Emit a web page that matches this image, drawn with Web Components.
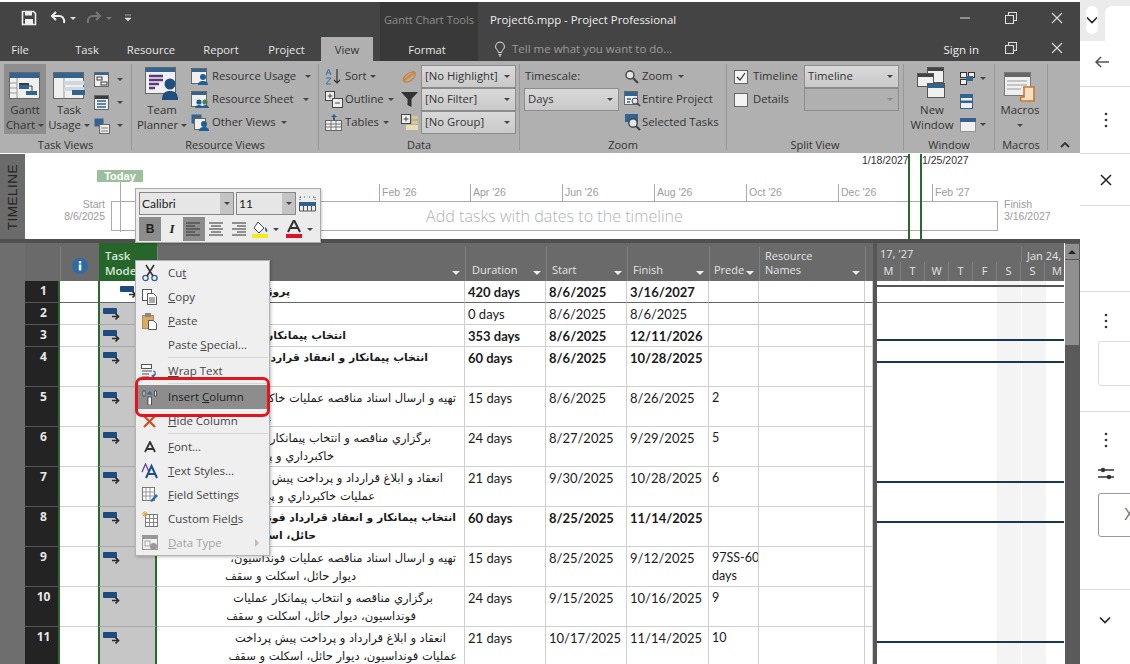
<!DOCTYPE html>
<html><head><meta charset="utf-8"><style>
html,body{margin:0;padding:0;width:1130px;height:664px;overflow:hidden;background:#fff;font-family:"Open Sans","Noto Sans",sans-serif}
</style></head><body>
<x-app></x-app>
<script>
const B='#33638f',D='#3c3c3c',W='#f0f0f0',G='#777';
const ICONS={
save:[16,16,`<path d="M1.5 1.5h11l2 2v11h-13z" fill="none" stroke="#eee" stroke-width="1.6"/><rect x="4" y="1.5" width="7" height="4" fill="#eee"/><rect x="4" y="9" width="8" height="5.5" fill="#eee"/>`],
undo:[18,16,`<path d="M15 13c1-5-2-7-5-7H3M7 2L3 6l4 4" fill="none" stroke="#eee" stroke-width="2"/>`],
redo:[18,16,`<path d="M3 13c-1-5 2-7 5-7h7M11 2l4 4-4 4" fill="none" stroke="#777" stroke-width="2"/>`],
bulb:[12,16,`<path d="M6 1a4.5 4.5 0 0 0-2.5 8.2c.6.5.7 1.3.8 2.3h3.4c.1-1 .2-1.8.8-2.3A4.5 4.5 0 0 0 6 1zM4.5 13.5h3M5 15h2" fill="none" stroke="#ddd"/>`],
gantt:[32,28,`<rect x=".5" y=".5" width="30" height="26" fill="${W}" stroke="#666"/><rect x="1" y="1" width="29" height="5" fill="${B}"/><path d="M8 6v20M1 11h7M1 16h7M1 21h7" stroke="#999"/><rect x="10" y="11" width="10" height="3" fill="${D}"/><rect x="10" y="13" width="10" height="4" fill="${B}"/><rect x="17" y="19" width="11" height="4" fill="${B}"/><path d="M20 14h3v5" stroke="${D}" fill="none"/>`],
usage:[32,28,`<rect x=".5" y=".5" width="30" height="26" fill="${W}" stroke="#666"/><rect x="1" y="1" width="29" height="5" fill="${B}"/><path d="M11 6v20" stroke="#999"/><rect x="11" y="9" width="20" height="4" fill="#cfd8e0"/><rect x="11" y="15" width="20" height="4" fill="#cfd8e0"/><rect x="19" y="18" width="13" height="5" fill="${B}"/>`],
net:[16,16,`<rect x=".5" y=".5" width="14" height="14" fill="${W}" stroke="#666"/><rect x="1" y="1" width="13" height="2" fill="${B}"/><rect x="3" y="5" width="5" height="3" fill="none" stroke="${D}"/><rect x="7" y="10" width="6" height="3" fill="none" stroke="${D}"/>`],
cal:[16,16,`<rect x=".5" y=".5" width="14" height="14" fill="${W}" stroke="#666"/><rect x="1" y="1" width="13" height="3" fill="${D}"/><path d="M3 6h9M3 9h9M3 12h9" stroke="${B}" stroke-width="1.4"/>`],
other:[16,16,`<rect x=".5" y=".5" width="9" height="8" fill="${B}"/><rect x="5.5" y="6.5" width="10" height="9" fill="${W}" stroke="#666"/><path d="M7 10h7M7 13h7" stroke="#777"/>`],
team:[34,34,`<rect x=".5" y=".5" width="30" height="26" fill="${W}" stroke="#666"/><rect x="1" y="1" width="29" height="4" fill="${B}"/><path d="M4 9h14M4 13h14M4 17h10M4 21h6" stroke="#5a3a78" stroke-width="2.4"/><circle cx="25" cy="17" r="5.5" fill="#1f4f7e"/><path d="M17 33c0-7 3-9 8-9s8 2 8 9z" fill="#1f4f7e"/>`],
resU:[19,18,`<rect x=".5" y=".5" width="15" height="15" fill="${W}" stroke="#666"/><rect x="1" y="1" width="14" height="3" fill="${B}"/><circle cx="12" cy="9" r="3" fill="#1f5f95"/><path d="M7 17c0-3 2-4 5-4s5 1 5 4z" fill="#1f5f95"/>`],
resS:[19,18,`<rect x=".5" y=".5" width="15" height="15" fill="${W}" stroke="#666"/><rect x="1" y="1" width="14" height="3" fill="${B}"/><circle cx="8" cy="11" r="2.6" fill="#1f5f95"/><circle cx="14" cy="11" r="2.6" fill="#4e7f4e"/><path d="M4 17c0-2 2-3 4-3s4 1 4 3zM11 17c0-2 2-3 3.5-3s3.5 1 3.5 3z" fill="#1f5f95"/>`],
resO:[19,18,`<rect x=".5" y=".5" width="10" height="9" fill="${B}"/><rect x="3.5" y="4.5" width="11" height="11" fill="${W}" stroke="#666"/><circle cx="13" cy="10" r="3" fill="#1f5f95"/><path d="M8 17c0-3 2-4 5-4s5 1 5 4z" fill="#1f5f95"/>`],
sort:[18,17,`<path d="M1 7l2.500-6L6 7M1.800 5h3.400M1 10h5l-5 6h5" fill="none" stroke="#3b6ea0"/><path d="M12 1v14M9 12l3 3 3-3" fill="none" stroke="#333" stroke-width="1.2"/>`],
outline:[18,17,`<rect x=".5" y=".5" width="9" height="9" fill="${W}" stroke="#444"/><path d="M2.5 5h5M5 2.5v5" stroke="#444"/><rect x="7.5" y="7.5" width="10" height="9" fill="${W}" stroke="#444"/><path d="M10 12h5" stroke="#444"/>`],
tables:[18,17,`<rect x=".5" y="6.5" width="16" height="10" fill="${W}" stroke="#666"/><path d="M6 7v9M11 7v9M1 10h15M1 13h15" stroke="#777"/><path d="M9 0l3 3h-2v3H8V3H6z" fill="${B}"/>`],
hl:[18,17,`<path d="M2 13L14 4" stroke="#d98a3a" stroke-width="2.6"/><path d="M4 8c3-4 9-5 10-3s-2 8-7 9-6-3-3-6z" fill="none" stroke="#c5803a" stroke-width="1.2"/>`],
filter:[18,17,`<path d="M0 1h17l-6.5 7v8l-4-2V8z" fill="#333"/>`],
group:[18,17,`<rect x=".5" y=".5" width="9" height="9" fill="${W}" stroke="#444"/><path d="M2.5 5h5M5 2.5v5" stroke="#444"/><rect x="11" y="2" width="6" height="3" fill="#d8c98c"/><rect x="11" y="7" width="6" height="3" fill="#d8c98c"/><rect x="5" y="11" width="12" height="5" fill="#e9dfb2"/>`],
zoom:[16,16,`<circle cx="6" cy="6" r="4" fill="#dfe6ec" stroke="#444" stroke-width="1.4"/><path d="M9 9l5 5" stroke="#444" stroke-width="2.2"/>`],
entire:[17,17,`<rect x=".5" y=".5" width="13" height="13" fill="${W}" stroke="#666"/><rect x="1" y="1" width="12" height="4" fill="${B}"/><path d="M3 8h4M3 11h3" stroke="${B}" stroke-width="1.5"/><circle cx="11" cy="10" r="3" fill="#dfe6ec" stroke="#444"/><path d="M13 12l3 3" stroke="#444" stroke-width="1.6"/>`],
sel:[17,17,`<path d="M1 0h13v8H1z" fill="${B}"/><circle cx="9" cy="9" r="4.2" fill="#dfe6ec" stroke="#444" stroke-width="1.4"/><path d="M12 12l4 4" stroke="#444" stroke-width="2.2"/>`],
winNew:[30,32,`<rect x="10.5" y=".5" width="16" height="15" fill="${W}" stroke="#555"/><rect x="11" y="1" width="15" height="3" fill="#444"/><rect x=".5" y="6.5" width="16" height="13" fill="${W}" stroke="#555"/><rect x="1" y="7" width="15" height="3" fill="#444"/><rect x="10.5" y="16.5" width="17" height="14" fill="${W}" stroke="#555"/><rect x="11" y="17" width="16" height="4" fill="${B}"/>`],
arr:[16,14,`<rect x=".5" y=".5" width="6" height="5" fill="${W}" stroke="#333"/><rect x="8.5" y=".5" width="6" height="5" fill="${W}" stroke="#333"/><rect x=".5" y="7.5" width="6" height="5" fill="${W}" stroke="#333"/><rect x="6" y="4" width="7" height="5" fill="${B}"/>`],
split:[14,16,`<rect x=".5" y=".5" width="12" height="14" fill="${W}" stroke="${B}"/><rect x="1" y="1" width="11" height="3" fill="${B}"/><rect x="1" y="6.5" width="11" height="2.5" fill="${B}"/>`],
sw:[16,14,`<rect x=".5" y=".5" width="15" height="13" fill="${W}" stroke="#555" stroke-dasharray="1 1"/><rect x="0" y="0" width="16" height="4" fill="${B}"/>`],
macro:[32,30,`<rect x=".5" y=".5" width="26" height="23" fill="${W}" stroke="#777"/><rect x="1" y="1" width="25" height="4" fill="#666"/><path d="M3 9h20M3 13h20M3 17h14" stroke="#999"/><path d="M20 15h10v14H18c-2 0-2-4 0-4h2z" fill="#f3dfc4" stroke="#c9772c" stroke-width="1.6"/>`],
scissors:[16,18,`<circle cx="3.5" cy="14" r="2.6" fill="none" stroke="#2f5f9a" stroke-width="1.3"/><circle cx="12.5" cy="14" r="2.6" fill="none" stroke="#2f5f9a" stroke-width="1.3"/><path d="M5 12L12 1M11 12L4 1" stroke="#333" stroke-width="1.6"/>`],
copy:[16,16,`<rect x=".5" y=".5" width="9" height="11" fill="#fff" stroke="#555"/><path d="M5.5 4.5h6l3 3v8h-9z" fill="#fff" stroke="#555"/><path d="M7 9h6M7 11h6M7 13h6" stroke="#555"/>`],
paste:[15,17,`<rect x=".5" y="2.5" width="11" height="13" fill="#d9ab66" stroke="#b98a44"/><rect x="3" y="0" width="6" height="4" fill="#888"/><path d="M6.5 7.5h5l3 3v6h-8z" fill="#fff" stroke="#555"/>`],
wrap:[17,15,`<rect x=".5" y=".5" width="10" height="4" fill="#fff" stroke="#555"/><path d="M1 7h10M1 10h7M1 13h7" stroke="#555"/><path d="M12 7c3 0 3 5 0 5M14 10l-3 2 3 2" fill="none" stroke="#2f6fa8" stroke-width="1.2"/>`],
ins:[16,15,`<path d="M1 1h2v5H1zM12.500 1h2v5h-2z" fill="#fff" stroke="#333" stroke-width=".8"/><rect x="6" y="7" width="3.500" height="8" fill="#fff" stroke="#333" stroke-width=".8"/><path d="M7.700 1l3 3.500H4.700z" fill="#2a6aa8"/>`],
hide:[14,13,`<path d="M1 1l11 11M12 1L1 12" stroke="#c8552a" stroke-width="2.4"/>`],
fontA:[12,12,`<path d="M1 11L6 1l5 10M3 8h6" fill="none" stroke="#333" stroke-width="1.8"/>`],
styles:[17,16,`<path d="M1 9L4.500 1 8 9" fill="none" stroke="#6a3fa0" stroke-width="1.300"/><path d="M5 15l5.500-12L16 15M7 11h7" fill="none" stroke="#1f4f8a" stroke-width="2"/>`],
field:[16,16,`<rect x=".5" y=".5" width="12" height="13" fill="#fff" stroke="#777"/><path d="M4 1v13M8 1v13M1 5h12M1 9h12" stroke="#999"/><path d="M8 14l6-7 2 2-6 6z" fill="#2f6fa8"/>`],
custom:[16,16,`<rect x="3.500" y="3.500" width="12" height="12" fill="#fff" stroke="#777"/><path d="M7.500 4v11M11.500 4v11M4 7.500h11M4 11.500h11" stroke="#888"/><path d="M3 0v6M0 3h6M1 1l4 4M5 1L1 5" stroke="#d9a93a"/>`],
dtype:[16,16,`<rect x=".5" y=".5" width="15" height="14" fill="none" stroke="#999"/><rect x="1" y="1" width="14" height="3" fill="#999"/><rect x="3" y="6" width="5" height="5" fill="none" stroke="#aaa"/><circle cx="11.500" cy="11.500" r="3.500" fill="#999"/>`],
wrapmini:[18,16,`<path d="M1 1h2M5 1h2M10 1h2M14 1h2M1 1v3M16 1v3" stroke="#333" stroke-width=".8" stroke-dasharray="1 1"/><rect x="0" y="6" width="17" height="4" fill="#31608c"/><path d="M.5 10v5h16v-5M4.500 10v5M8.500 10v5M12.500 10v5" fill="none" stroke="#555"/>`],
fill:[18,18,`<path d="M6 2l6 6-5 5-5-5z" fill="#fff" stroke="#444"/><path d="M13 7c2 2 3 3 2 5-2 0-2-3-2-5z" fill="#31608c"/><rect x="0" y="14" width="16" height="4" fill="#f2ea1a"/>`],
fcolor:[16,18,`<path d="M2 12L8 0l6 12M4.500 8h7" fill="none" stroke="#333" stroke-width="2"/><rect x="0" y="14" width="16" height="4" fill="#e01020"/>`],
aL:[16,14,`<path d="M0 1h14M0 4h9M0 7h14M0 10h9M0 13h14" stroke="#333"/>`],
aC:[16,14,`<path d="M1 1h14M3 4h10M1 7h14M3 10h10M1 13h14" stroke="#333"/>`],
aR:[16,14,`<path d="M2 1h14M7 4h9M2 7h14M7 10h9M2 13h14" stroke="#333"/>`],
mode:[18,14,`<rect x="0" y="0" width="14" height="6" rx="1" fill="#1f4b7e"/><path d="M9 8.500h6M12.500 5.500l3 3-3 3" fill="none" stroke="#2a2a2a" stroke-width="1.700"/>`],
info:[16,16,`<circle cx="8" cy="8" r="8" fill="#2e6ba5"/><rect x="6.800" y="6.500" width="2.500" height="6" fill="#fff"/><rect x="6.800" y="3.200" width="2.500" height="2.200" fill="#fff"/>`],
back:[16,14,`<path d="M15 7H2M7 2L2 7l5 5" fill="none" stroke="#555" stroke-width="1.500"/>`],
chev:[12,8,`<path d="M1 1.500l5 5 5-5" fill="none" stroke="#222" stroke-width="1.600"/>`],
kebab:[4,16,`<circle cx="2" cy="2" r="1.300" fill="#333"/><circle cx="2" cy="8" r="1.300" fill="#333"/><circle cx="2" cy="14" r="1.300" fill="#333"/>`],
close:[12,12,`<path d="M1 1l10 10M11 1L1 11" stroke="#222" stroke-width="1.500"/>`],
sliders:[16,13,`<path d="M0 3h16M0 10h16" stroke="#333" stroke-width="1.300"/><circle cx="5" cy="3" r="2.200" fill="#333"/><circle cx="11" cy="10" r="2.200" fill="#333"/>`],
min:[12,12,`<path d="M1 6h10" stroke="#ddd"/>`],
restore:[12,12,`<path d="M.5 3.500h8v8h-8zM3.500 3V.5h8v8H9" fill="none" stroke="#ddd" stroke-width="1.100"/>`],
x:[12,12,`<path d="M1 1l10 10M11 1L1 11" stroke="#ddd" stroke-width="1.100"/>`],
up:[10,6,`<path d="M1 5l4-4 4 4" fill="none" stroke="#333" stroke-width="1.800"/>`]
};
function def(name,html){customElements.define(name,class extends HTMLElement{
 connectedCallback(){ if(this.shadowRoot)return; const s=this.attachShadow({mode:'open'});
  s.innerHTML=typeof html==='function'?html(this):html; }});}
const a=(e,n,d='')=>e.getAttribute(n)??d;

def('x-ic',e=>{const i=ICONS[a(e,'n')];return `<style>:host{display:inline-flex;flex:none;line-height:0}</style><svg xmlns="http://www.w3.org/2000/svg" width="${i[0]}" height="${i[1]}" viewBox="0 0 ${i[0]} ${i[1]}">${i[2]}</svg>`});
def('x-caret',e=>`<style>:host{display:inline-block;flex:none;width:0;height:0;border-left:3px solid transparent;border-right:3px solid transparent;border-top:3px solid ${a(e,'c','#444')};margin-left:${a(e,'m','4')}px}</style>`);

def('x-tab',e=>`<style>:host{display:flex;align-items:center;justify-content:center;height:100%;flex:none;box-sizing:border-box;width:${a(e,'w')}px;margin-right:${a(e,'mr','0')}px;color:#e6e6e6;font-size:11.200px}
:host([active]){background:#b0b0b0;color:#333}</style><slot></slot>`);

def('x-titlebar',`<style>:host{display:block;background:#444;color:#eee;margin-top:2px}
.r1{display:flex;height:32px;align-items:stretch}.r2{display:flex;height:27px;align-items:flex-end}
.qat{width:380px;display:flex;align-items:center;padding-left:21px;box-sizing:border-box;gap:0}
.tools{width:98px;background:#393939;display:flex;align-items:center;justify-content:center;color:#8d8d8d;font-size:11px;padding:2px 0 0}
.title{padding:2px 0 0 12px;display:flex;align-items:center;font-size:11.400px;color:#eee;flex:1}
.win{display:flex;align-items:center}.win x-ic{width:46px;justify-content:center}
.fmt{width:98px;box-sizing:border-box;background:#393939;display:flex;align-items:center;justify-content:center;height:27px;font-size:11.200px;color:#e6e6e6;padding:3px 4px 0 0}
.tell{display:flex;align-items:center;gap:6px;color:#9b9b9b;font-size:11.500px;height:27px;margin-left:16px;flex:1;padding-top:2px;box-sizing:border-box}
.sign{font-size:11.500px;color:#eee;height:27px;display:flex;align-items:center;margin-right:9px;padding-top:3px;box-sizing:border-box}
.r2 .win{height:27px}
</style>
<div class="r1"><div class="qat"><x-ic n="save"></x-ic><span style="width:12px"></span><x-ic n="undo"></x-ic><x-caret c="#ddd" m="3"></x-caret><span style="width:9px"></span><x-ic n="redo"></x-ic><x-caret c="#777" m="3"></x-caret><span style="width:13px"></span><svg width="6" height="8"><path d="M0 1h6M0 4h6l-3 3z" fill="#ddd" stroke="#ddd" stroke-width=".6"/></svg></div>
<div class="tools">Gantt Chart Tools</div><div class="title">Project6.mpp - Project Professional</div>
<div class="win"><x-ic n="min"></x-ic><x-ic n="restore"></x-ic><x-ic n="x"></x-ic></div></div>
<div class="r2"><div style="display:flex;height:24px;width:380px"><x-tab w="40" mr="22">File</x-tab><x-tab w="50">Task</x-tab><x-tab w="78">Resource</x-tab><x-tab w="62">Report</x-tab><x-tab w="69">Project</x-tab><x-tab w="52" active>View</x-tab></div>
<div class="fmt">Format</div>
<div class="tell"><x-ic n="bulb"></x-ic><span>Tell me what you want to do...</span></div>
<div class="sign">Sign in</div><div class="win"><x-ic n="restore"></x-ic><x-ic n="x"></x-ic></div></div>`);

def('x-group',e=>`<style>:host{display:flex;flex-direction:column;box-sizing:border-box;width:${a(e,'w')}px;flex:none;position:relative;height:92px;padding-top:3px}
.b{height:72px;display:flex;padding-left:${a(e,'pl','4')}px;box-sizing:border-box;gap:${a(e,'gap','2')}px}
.l{height:17px;line-height:17px;text-align:center;font-size:11px;color:#333}
.sep{border-right:1px solid #979797;height:86px;width:0}
.wrap{display:flex;height:89px}.in{flex:1;min-width:0}</style>
<div class="wrap"><div class="in"><div class="b"><slot></slot></div><div class="l">${a(e,'label')}</div></div>${e.hasAttribute('nosep')?'':'<div class="sep"></div>'}</div>`);

def('x-big',e=>`<style>:host{display:flex;flex-direction:column;align-items:center;width:${a(e,'w','42')}px;flex:none;height:70px;box-sizing:border-box;font-size:11.400px;line-height:15px;color:#333;text-align:center}
:host([on]){background:#8e8e8e}
.i{height:38px;display:flex;align-items:flex-end;justify-content:center;padding-bottom:${a(e,'ib','2')}px;box-sizing:border-box}
.t{white-space:nowrap}</style><div class="i"><x-ic n="${a(e,'n')}"></x-ic></div><div class="t">${a(e,'l1')}<br>${a(e,'l2')}${e.hasAttribute('caret')?'<x-caret m="3" style="vertical-align:middle"></x-caret>':''}</div>`);

def('x-small',e=>`<style>:host{display:flex;align-items:center;height:23px;font-size:11.300px;color:#333;white-space:nowrap;width:${a(e,'w','auto')}${a(e,'w')?'px':''};flex:none}
span{margin-left:${a(e,'g','2')}px;padding-bottom:2px}</style><x-ic n="${a(e,'n')}"></x-ic>${a(e,'t')?`<span>${a(e,'t')}</span>`:''}${e.hasAttribute('caret')?`<x-caret m="${a(e,'cm','5')}"></x-caret>`:''}`);

def('x-combo',e=>`<style>:host{display:flex;align-items:center;box-sizing:border-box;width:${a(e,'w')}px;height:23px;background:${e.hasAttribute('dis')?'#b0b0b0':'linear-gradient(#d9d9d9,#c9c9c9)'};border:1px solid #8c8c8c;font-size:11.300px;color:#333;padding:0 5px 0 3px;justify-content:space-between;flex:none}
span{padding-bottom:2px}</style><span>${a(e,'t')}</span><x-caret m="0" c="${e.hasAttribute('dis')?'#8a8a8a':'#444'}"></x-caret>`);

def('x-check',e=>`<style>:host{display:flex;align-items:center;height:23px;font-size:11.300px;color:#333;gap:5px}
i{width:12px;height:12px;background:#f4f4f4;border:1px solid #666;display:flex;align-items:center;justify-content:center}
span{padding-bottom:2px}</style><i>${e.hasAttribute('on')?'<svg width="10" height="10"><path d="M1 5l3 3 5-7" fill="none" stroke="#333" stroke-width="1.200"/></svg>':''}</i><span>${a(e,'t')}</span>`);

def('x-col',e=>`<style>:host{display:flex;flex-direction:column;padding-top:${a(e,'pt','1')}px;flex:none;box-sizing:border-box;width:${a(e,'w','auto')}${a(e,'w')?'px':''};margin-left:${a(e,'ml','0')}px}</style><slot></slot>`);

def('x-ribbon',`<style>:host{display:flex;background:#b0b0b0;height:92px;position:relative}
.up{margin-left:12px;align-self:flex-end;margin-bottom:5px}
.ts{height:23px;line-height:21px;font-size:11.300px;color:#333;padding-left:1px}</style>
<x-group w="132" label="Task Views" gap="2"><x-big on n="gantt" l1="Gantt" l2="Chart" caret></x-big><x-big n="usage" l1="Task" l2="Usage" caret></x-big>
<x-col ml="2" pt="4"><x-small n="net" caret cm="7"></x-small><x-small n="cal" caret cm="7"></x-small><x-small n="other" caret cm="7"></x-small></x-col></x-group>
<x-group w="187" label="Resource Views" pl="5" gap="4"><x-big w="50" n="team" ib="1" l1="Team" l2="Planner" caret></x-big>
<x-col pt="1"><x-small n="resU" t="Resource Usage" caret cm="9"></x-small><x-small n="resS" t="Resource Sheet" caret cm="9"></x-small><x-small n="resO" t="Other Views" caret></x-small></x-col></x-group>
<x-group w="201" label="Data" pl="6" gap="0"><x-col w="76" pt="1"><x-small n="sort" t="Sort" g="2" caret cm="3"></x-small><x-small n="outline" t="Outline" g="2" caret cm="4"></x-small><x-small n="tables" t="Tables" g="2" caret cm="4"></x-small></x-col>
<x-col pt="1" w="20"><x-small n="hl"></x-small><x-small n="filter"></x-small><x-small n="group"></x-small></x-col><x-col pt="1"><x-combo w="95" t="[No Highlight]"></x-combo><x-combo w="95" t="[No Filter]"></x-combo><x-combo w="95" t="[No Group]"></x-combo></x-col></x-group>
<x-group w="207" label="Zoom" pl="4" gap="5"><x-col w="95" pt="1"><div class="ts">Timescale:</div><x-combo w="95" t="Days"></x-combo></x-col>
<x-col pt="1"><x-small n="zoom" t="Zoom" g="2" caret></x-small><x-small n="entire" t="Entire Project" g="1"></x-small><x-small n="sel" t="Selected Tasks" g="1"></x-small></x-col></x-group>
<x-group w="177" label="Split View" pl="7" gap="0"><x-col w="70" pt="1"><x-check on t="Timeline"></x-check><x-check t="Details"></x-check></x-col><x-col pt="1"><x-combo w="95" t="Timeline"></x-combo><x-combo w="95" dis></x-combo></x-col></x-group>
<x-group w="91" label="Window" pl="6" gap="6"><x-big w="44" n="winNew" ib="3" l1="New" l2="Window"></x-big><x-col pt="3"><x-small n="arr" caret cm="4"></x-small><x-small n="split"></x-small><x-small n="sw" caret cm="4"></x-small></x-col></x-group>
<x-group w="53" label="Macros" pl="4"><x-big w="42" n="macro" ib="0" l1="Macros" l2="<x-caret m='0' style='vertical-align:middle'></x-caret>"></x-big></x-group>
<x-ic class="up" n="up"></x-ic>`);

def('x-tl-tick',e=>`<style>:host{position:absolute;left:${a(e,'x')}px;top:${a(e,'y','30')}px;height:${a(e,'h','17')}px;border-left:1px solid ${a(e,'c','#aaa')};padding-left:2px;font:10.500px/16px "Liberation Sans",sans-serif;color:#9c9c9c;white-space:nowrap}</style><slot></slot>`);

def('x-timeline',`<style>:host{display:flex;height:86px;background:#fff}
.lab{width:25px;flex:none;background:#6b6b6b;display:flex;align-items:center;justify-content:center}
.lab span{writing-mode:vertical-rl;transform:rotate(180deg);font:13.500px "Liberation Sans",sans-serif;letter-spacing:.5px;color:#262626}
.c{flex:1;position:relative;font-family:"Liberation Sans",sans-serif;overflow:hidden}
.bar{position:absolute;left:86px;top:47px;width:887px;height:30px;border:1px solid #aaa;box-sizing:border-box;display:flex;align-items:center;justify-content:center;color:#b3b3b3;font:300 16.100px "Open Sans",sans-serif}
.today{position:absolute;left:72px;top:16px;width:46px;height:12px;background:#9dbf9d;color:#fff;font:bold 11px/12px "Liberation Sans";text-align:center}
.tl{position:absolute;left:95px;top:28px;height:50px;border-left:1px solid #aaa}
.s{position:absolute;font-size:10.500px;line-height:12px;color:#9c9c9c;white-space:nowrap}
.m{position:absolute;top:0;font-size:10.500px;line-height:12px;color:#333}
.g{position:absolute;top:0;width:2px;height:86px;background:#2b6a2e}</style>
<div class="lab"><span>TIMELINE</span></div>
<div class="c"><div class="bar">Add tasks with dates to the timeline</div><div class="today">Today</div><div class="tl"></div>
<div class="s" style="right:975px;top:44px;text-align:right">Start<br>8/6/2025</div>
<div class="s" style="left:979px;top:44px">Finish<br>3/16/2027</div>
<x-tl-tick x="354">Feb '26</x-tl-tick><x-tl-tick x="445">Apr '26</x-tl-tick><x-tl-tick x="537">Jun '26</x-tl-tick><x-tl-tick x="629">Aug '26</x-tl-tick><x-tl-tick x="721">Oct '26</x-tl-tick><x-tl-tick x="813">Dec '26</x-tl-tick><x-tl-tick x="907">Feb '27</x-tl-tick>
<div class="m" style="left:837px">1/18/2027</div><div class="m" style="left:897px">1/25/2027</div><div class="g" style="left:883px"></div><div class="g" style="left:895px"></div></div>`);

const GRID='35px 38px 59px 308px 81px 81px 82px 50px 106px 8px 4px 187px';
def('x-head',`<style>:host{display:grid;grid-template-columns:${GRID};height:38px;background:#6a6a6a;color:#e4e4e4;font-size:11px;line-height:14px;box-sizing:border-box}
.c{border-left:1px solid #808080;position:relative;display:flex;align-items:flex-end;padding:0 0 4px 5px;box-sizing:border-box;white-space:nowrap;overflow:hidden;margin-top:4px}
.c x-caret{position:absolute;right:5px;bottom:6px;border-left-width:4px;border-right-width:4px;border-top-width:4px}
.tm{background:#27662a;color:#d8e8d8;font-weight:600;margin-top:0;padding-bottom:3px;border-left:1px solid #27662a;padding-left:5px;font-size:11.500px;line-height:15px;overflow:hidden;margin-left:1px}
.info{justify-content:center;align-items:center;padding:4px 0 0}
.sp{background:#575757;padding:0;margin:0;border:0}
.g{height:38px;margin-top:0;padding:0;display:block;overflow:hidden;border:0}
.w{height:19px;line-height:22px;display:grid;grid-template-columns:144px 43px}
.w span{padding-left:3px;overflow:hidden}.w span+span{border-left:1px solid #7f7f7f;padding-left:5px;margin-top:4px;line-height:18px}
.d{display:grid;grid-template-columns:repeat(8,24px)}.d span{text-align:center;border-right:1px solid #7f7f7f;line-height:18px;height:19px;box-sizing:border-box}</style>
<div class="c" style="border:0"></div><div class="c info"><x-ic n="info"></x-ic></div><div class="c tm"><span>Task<br>Mode</span></div>
<div class="c"><x-caret c="#eee" m="0"></x-caret></div><div class="c" style="padding-left:6px">Duration<x-caret c="#eee" m="0"></x-caret></div>
<div class="c" style="padding-left:5px">Start<x-caret c="#eee" m="0"></x-caret></div><div class="c" style="padding-left:5px">Finish<x-caret c="#eee" m="0"></x-caret></div>
<div class="c" style="padding-left:4px">Prede<x-caret c="#eee" m="0"></x-caret></div><div class="c">Resource<br>Names<x-caret c="#eee" m="0"></x-caret></div><div class="c"></div>
<div class="c sp"></div>
<div class="c g"><div class="w"><span>17, '27</span><span>Jan 24,</span></div><div class="d"><span>M</span><span>T</span><span>W</span><span>T</span><span>F</span><span>S</span><span>S</span><span style="border:0">M</span></div></div>`);

def('x-row',e=>{const h=a(e,'h','40'),first=a(e,'num')==='1',b=e.hasAttribute('bold');const ln=a(e,'line');
const line=ln?`<div class="ln ${ln}"></div>`:'';
return `<style>:host{display:grid;grid-template-columns:${GRID};height:${h}px;font:${b?'700 ':''}13px/18px Lato,sans-serif;color:#1a1a1a}
.c{background:#fff;border-bottom:1px solid ${first?'#666':'#cfcfcf'};border-right:1px solid #cfcfcf;box-sizing:border-box;padding:2px 0 0 3px;overflow:hidden;white-space:nowrap}
.n{background:#232323;color:#e8e8e8;font:700 12px/20px "Open Sans",sans-serif;text-align:center;border-bottom-color:#555;border-right:2px solid #2b6a2e;padding:0 0 0 4px}
.i{padding:0;border-right:0}
.m{background:${first?'#fff':'#c6c6c6'};border-left:2px solid #2b6a2e;border-right:2px solid #2b6a2e;padding:${first?'5px 0 0 20px':'5px 0 0 3px'};border-bottom-color:${first?'#666':'#a8a8a8'}}
.name{padding:2px 0 0;font-family:"DejaVu Sans",sans-serif;font-size:${b?'10.800':'11.500'}px;line-height:18px;overflow:visible}
.p{line-height:18px;padding-left:3px;font-size:12.500px}
.sp{background:#575757;border:0;padding:0}
.g{padding:0;border-right:0;border-bottom:${first?'1px solid #666':'0'};background:linear-gradient(90deg,#fff 120px,#f4f4f5 120px,#f4f4f5 144px,#fff 144px,#fff 145px,#f4f4f5 145px,#f4f4f5 169px,#fff 169px);overflow:hidden}
.ln{height:2px;margin-top:14px;background:#1c3557}.ln.sum{margin-top:4px;height:2px;background:#555}</style>
<div class="c n">${a(e,'num')}</div><div class="c i"></div><div class="c m"><x-ic n="mode"></x-ic></div><div class="c name"><slot></slot></div>
<div class="c">${a(e,'dur')}</div><div class="c">${a(e,'st')}</div><div class="c">${a(e,'fin')}</div><div class="c p">${a(e,'pred')}</div><div class="c"></div><div class="c"></div><div class="c sp"></div><div class="c g">${line}</div>`});

def('x-fa',e=>`<style>:host{display:block;direction:rtl;text-align:right;white-space:nowrap;padding-right:${465-(+a(e,'edge'))}px;box-sizing:border-box}</style><slot></slot>`);

def('x-scroll',`<style>:host{display:block;width:16px;flex:none;background:#5a5a5a;box-sizing:border-box;padding:1px 1px 0 0;border-left:1px solid #fff}
.b{height:15px;background:#8f8f8f;display:flex;align-items:center;justify-content:center;margin-bottom:1px}
.b i{border-left:4px solid transparent;border-right:4px solid transparent;border-bottom:4px solid #222}
.t{height:85px;background:#8f8f8f}</style><div class="b"><i></i></div><div class="t"></div>`);

def('x-sheet',`<style>:host{display:flex;background:#6b6b6b;height:424px;overflow:hidden}
.l{width:25px;flex:none;background:#6e6e6e}.t{width:1039px;flex:none;overflow:hidden}</style>
<div class="l"></div><div class="t"><slot></slot></div><x-scroll></x-scroll>`);

def('x-mini',`<style>:host{position:absolute;left:135px;top:188px;width:186px;height:55px;background:#ececec;border:1px solid #aaa;box-sizing:border-box;padding:3px;font:11.500px Lato,sans-serif;color:#222;box-shadow:1px 1px 2px rgba(0,0,0,.2)}
.r{display:flex;height:24px}.cb{height:23px;border:1px solid #888;box-sizing:border-box;background:#e6e6e6;display:flex;align-items:center;padding-left:2px;justify-content:space-between;font-size:12px}
.ar{width:13px;height:21px;background:#c4c4c4;display:flex;align-items:center;justify-content:center}
.b{width:22px;height:24px;display:flex;align-items:center;justify-content:center;font:bold 12px "Liberation Sans"}
.on{background:#8c8c8c}.ml{margin-left:2px}</style>
<div class="r"><div class="cb" style="width:95px">Calibri<span class="ar"><x-caret m="0"></x-caret></span></div><div class="cb ml" style="width:60px">11<span class="ar"><x-caret m="0"></x-caret></span></div><span style="width:3px"></span><x-ic n="wrapmini" style="margin-top:4px"></x-ic></div>
<div class="r" style="margin-top:1px"><div class="b on">B</div><div class="b" style="font-style:italic;font-family:'Liberation Serif';font-size:13px">I</div><div class="b on"><x-ic n="aL"></x-ic></div><div class="b"><x-ic n="aC"></x-ic></div><div class="b"><x-ic n="aR"></x-ic></div>
<div class="b" style="width:24px"><x-ic n="fill"></x-ic></div><x-caret m="0" style="align-self:center;margin-right:5px"></x-caret><div class="b" style="width:20px"><x-ic n="fcolor"></x-ic></div><x-caret m="3" style="align-self:center"></x-caret></div>`);

def('x-item',e=>`<style>:host{display:flex;align-items:center;height:24px;font-size:11.500px;color:${e.hasAttribute('dis')?'#a2a2a2':'#444'}}
:host([hot]){background:#8d8d8d;color:#222}
.i{width:23px;display:flex;justify-content:center;flex:none}
.t{flex:1;white-space:nowrap;padding:0 0 2px 7px}u{text-underline-offset:1px}
.a{border-left:4px solid #bbb;border-top:4px solid transparent;border-bottom:4px solid transparent;margin-right:9px}</style>
<div class="i">${a(e,'n')?`<x-ic n="${a(e,'n')}"></x-ic>`:''}</div><div class="t"><slot></slot></div>${e.hasAttribute('sub')?'<i class="a"></i>':''}`);

def('x-sep',`<style>:host{display:block;height:1px;margin:0 0 1px 30px;background:#d8d8d8}</style>`);

def('x-menu',`<style>:host{position:absolute;left:135px;top:260px;width:135px;height:296px;background:#efefef;border:1px solid #b3b3b3;box-sizing:border-box;padding-left:2px;padding-right:1px;box-shadow:1px 1px 3px rgba(0,0,0,.25)}
.hl{position:absolute;left:-1px;top:116px;width:135px;height:40px;border:3.500px solid #e1161f;border-radius:7px;box-sizing:border-box}</style><slot></slot><div class="hl"></div>`);

def('x-side',`<style>:host{display:flex;flex-direction:column;width:50px;flex:none;background:#fff;height:664px;overflow:hidden}
.s{box-sizing:border-box;border-bottom:1px solid #dcdcdc;display:flex;flex-direction:column;align-items:center;position:relative;flex:none;padding-left:2px}
.tab{height:41px;background:#ebebeb;flex-direction:row;align-items:flex-start;padding:6px 0 0 6px;border:0;gap:7px}
.tab div{width:27px;height:28px;background:#fff;border-radius:7px;display:flex;align-items:center;justify-content:center}
.box{width:60px;box-sizing:border-box;border:1px solid #ddd;border-radius:3px;align-self:flex-start;margin-left:16px}
.tab b{width:30px;height:35px;background:#fff;border-radius:7px 0 0 0;flex:none}</style>
<div class="s tab"><div><x-ic n="chev"></x-ic></div><b></b></div>
<div class="s" style="height:46px;padding:14px 6px 0 0"><x-ic n="back"></x-ic></div>
<div class="s" style="height:67px;padding-top:25px"><x-ic n="kebab"></x-ic></div>
<div class="s" style="height:52px;padding-top:20px"><x-ic n="close"></x-ic></div>
<div class="s" style="height:86px"></div>
<div class="s" style="height:120px;padding-top:21px"><x-ic n="kebab"></x-ic><div class="box" style="height:45px;margin-top:12px"></div></div>
<div class="s" style="height:178px;padding-top:20px"><x-ic n="kebab"></x-ic><x-ic n="sliders" style="margin-top:19px"></x-ic><div class="box" style="height:44px;margin-top:13px;border-color:#999;font:16px 'Liberation Sans';color:#777;line-height:42px;padding-left:25px;overflow:hidden">X</div></div>
<div style="height:60px;padding-top:26px;display:flex;justify-content:center"><x-ic n="chev"></x-ic></div>`);

def('x-app',`<style>:host{display:flex;width:1130px;height:664px;position:relative;overflow:hidden;background:#fff}
.m{width:1080px;flex:none;display:flex;flex-direction:column}
.band{height:4px;background:#505050;flex:none}</style>
<div class="m"><x-titlebar></x-titlebar><x-ribbon></x-ribbon><div style="height:1px;flex:none;background:#fff"></div><x-timeline></x-timeline><div class="band"></div>
<x-sheet><x-head></x-head>
<x-row num="1" h="22" bold dur="420 days" st="8/6/2025" fin="3/16/2027" line="sum"><x-fa edge="291">پروژه ساختمان</x-fa></x-row>
<x-row num="2" h="22" dur="0 days" st="8/6/2025" fin="8/6/2025"></x-row>
<x-row num="3" h="22" bold dur="353 days" st="8/6/2025" fin="12/11/2026" line="b"><x-fa edge="347">انتخاب پیمانکار</x-fa></x-row>
<x-row num="4" bold dur="60 days" st="8/6/2025" fin="10/28/2025" line="b"><x-fa edge="429">انتخاب پیمانکار و انعقاد قرارداد خاکبرداری</x-fa></x-row>
<x-row num="5" dur="15 days" st="8/6/2025" fin="8/26/2025" pred="2"><x-fa edge="457">تهیه و ارسال اسناد مناقصه عملیات خاکبرداری</x-fa><x-fa edge="272">پی</x-fa></x-row>
<x-row num="6" dur="24 days" st="8/27/2025" fin="9/29/2025" pred="5"><x-fa edge="432">برگزاري مناقصه و انتخاب پیمانکار عملیات</x-fa><x-fa edge="335">خاکبرداري و پی</x-fa></x-row>
<x-row num="7" dur="21 days" st="9/30/2025" fin="10/28/2025" pred="6" line="b"><x-fa edge="444">انعقاد و ابلاغ قرارداد و پرداخت پیش پرداخت</x-fa><x-fa edge="376">عملیات خاکبرداري و پی</x-fa></x-row>
<x-row num="8" bold dur="60 days" st="8/25/2025" fin="11/14/2025" line="b"><x-fa edge="457">انتخاب پیمانکار و انعقاد قرارداد فونداسیون، دیوار</x-fa><x-fa edge="317">حائل، اسکلت و سقف</x-fa></x-row>
<x-row num="9" dur="15 days" st="8/25/2025" fin="9/12/2025" pred="97SS-60<br>days"><x-fa edge="457">تهیه و ارسال اسناد مناقصه عملیات فونداسیون،</x-fa><x-fa edge="357">دیوار حائل، اسکلت و سقف</x-fa></x-row>
<x-row num="10" dur="24 days" st="9/15/2025" fin="10/16/2025" pred="9"><x-fa edge="434">برگزاري مناقصه و انتخاب پیمانکار عملیات</x-fa><x-fa edge="417">فونداسیون، دیوار حائل، اسکلت و سقف</x-fa></x-row>
<x-row num="11" dur="21 days" st="10/17/2025" fin="11/14/2025" pred="10" line="b"><x-fa edge="447">انعقاد و ابلاغ قرارداد و پرداخت پیش پرداخت</x-fa><x-fa edge="458">عملیات فونداسیون، دیوار حائل، اسکلت و سقف</x-fa></x-row>
</x-sheet></div>
<x-side></x-side>
<x-mini></x-mini>
<x-menu>
<x-item n="scissors">Cu<u>t</u></x-item><x-item n="copy"><u>C</u>opy</x-item><x-item n="paste"><u>P</u>aste</x-item><x-item>Paste <u>S</u>pecial...</x-item><x-sep></x-sep>
<x-item n="wrap"><u>W</u>rap Text</x-item><x-sep></x-sep><x-item hot n="ins">Insert <u>C</u>olumn</x-item><x-item n="hide"><u>H</u>ide Column</x-item><x-sep></x-sep>
<x-item n="fontA"><u>F</u>ont...</x-item><x-item n="styles"><u>T</u>ext Styles...</x-item><x-item n="field"><u>F</u>ield Settings</x-item><x-item n="custom">Custom Fiel<u>d</u>s</x-item><x-item dis sub n="dtype"><u>D</u>ata Type</x-item>
</x-menu>`);
</script>
</body></html>
